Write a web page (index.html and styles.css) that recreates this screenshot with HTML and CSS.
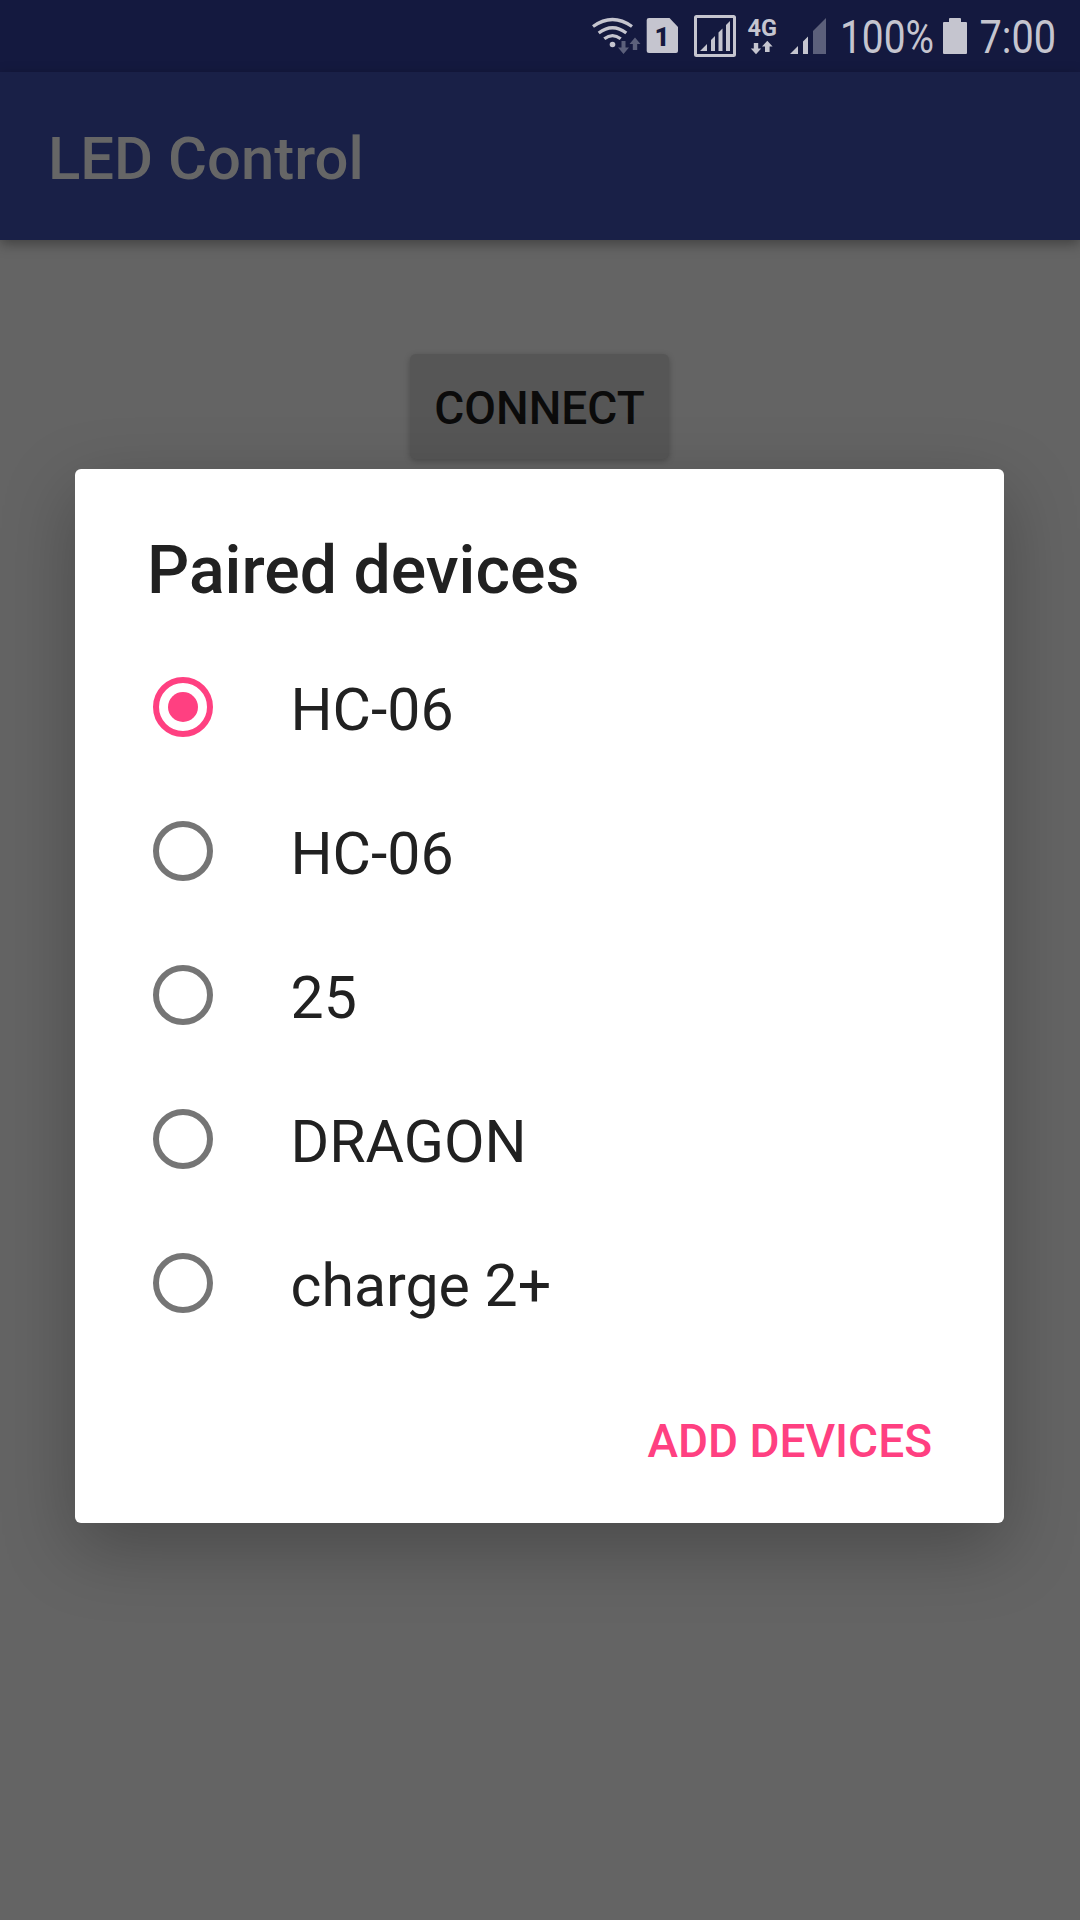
FILE: index.html
```html
<!DOCTYPE html>
<html lang="en">
<head>
<meta charset="utf-8">
<title>LED Control</title>
<link rel="stylesheet" href="styles.css">
</head>
<body>
<div class="screen">
  <header class="status-bar">
    <svg class="wifi" width="54" height="72" viewBox="590 0 54 72">
      <g class="arc">
        <path d="M593 26.5Q612.500 12.500 632 26.500"/>
        <path d="M598.700 33Q612.500 22.500 626.300 33"/>
        <path d="M604.300 38.800Q612.500 32.500 620.700 38.800"/>
      </g>
      <circle class="ink" cx="612.500" cy="44.500" r="2.800"/>
      <path class="dim" d="M621.500 41h4v6.500h3.500l-5.500 6.500l-5.500-6.500h3.500zM632.800 50v-6h-3.300l5.500-6.500l5.500 6.500h-3.300v6z"/>
    </svg>
    <svg class="sim" width="36" height="72" viewBox="644 0 36 72">
      <path class="ink" d="M649 18H669.500L678 27V51Q678 53 676 53H649Q646.700 53 646.700 51V20Q646.700 18 649 18z"/>
      <text class="sim-number" x="654.500" y="45.700">1</text>
    </svg>
    <svg class="boxed-signal" width="44" height="72" viewBox="693 0 44 72">
      <rect class="frame" x="695.500" y="16.500" width="39" height="39" rx="1"/>
      <path class="ink" d="M700 51l7-7v7zM711 51V40l4-4v15zM718.500 51V32.500l4-4v22.500zM726 51V25l4-4v30z"/>
    </svg>
    <svg class="network" width="34" height="72" viewBox="745 0 34 72">
      <text class="network-label" x="747.500" y="36" textLength="29.500" lengthAdjust="spacingAndGlyphs">4G</text>
      <path class="ink" d="M753.800 43h4.400v5.500h3l-5.200 5.800l-5.200-5.800h3zM765 52v-5.500h-3l5.300-5.800l5.300 5.800h-3v5.500z"/>
    </svg>
    <svg class="signal" width="40" height="72" viewBox="788 0 40 72">
      <path class="ink" d="M790 54l8-8v8zM803 54V41.500l5-5v17.500z"/>
      <path class="dim" d="M813 54V31l13-13v36z"/>
    </svg>
    <svg class="percent" width="100" height="72" viewBox="838 0 100 72">
      <text class="status-text" x="840" y="53" textLength="94" lengthAdjust="spacingAndGlyphs">100%</text>
    </svg>
    <svg class="battery" width="26" height="72" viewBox="942 0 26 72">
      <path class="ink" d="M949 22V19Q949 18 950 18H960Q961 18 961 19V22H966Q967 22 967 23V53Q967 54 966 54H944Q943 54 943 53V23Q943 22 944 22z"/>
    </svg>
    <svg class="clock" width="84" height="72" viewBox="976 0 84 72">
      <text class="status-text" x="979.500" y="53" textLength="76.500" lengthAdjust="spacingAndGlyphs">7:00</text>
    </svg>
  </header>
  <div class="app-bar"><h1 class="app-title">LED Control</h1></div>
  <main class="content">
    <button class="connect">CONNECT</button>
    <section class="dialog">
      <h2 class="dialog-title">Paired devices</h2>
      <ul class="devices">
        <li class="device"><span class="radio checked"></span><span class="name">HC-06</span></li>
        <li class="device"><span class="radio"></span><span class="name">HC-06</span></li>
        <li class="device"><span class="radio"></span><span class="name">25</span></li>
        <li class="device"><span class="radio"></span><span class="name">DRAGON</span></li>
        <li class="device"><span class="radio"></span><span class="name">charge 2+</span></li>
      </ul>
      <div class="actions"><button class="add">ADD DEVICES</button></div>
    </section>
  </main>
</div>
</body>
</html>
```

FILE: styles.css
```css
* { box-sizing: border-box; margin: 0; padding: 0; }
body { font-family: Roboto, "Liberation Sans", sans-serif; background: #646464; }
button { border: 0; background: none; font-family: inherit; }
.screen { width: 1080px; height: 1920px; display: flex; flex-direction: column; overflow: hidden; background: #646464; }

.status-bar { height: 72px; flex: none; display: flex; padding-left: 590px; background: #14193f; }
.status-bar svg { flex: none; display: block; overflow: visible; }
.boxed-signal { margin-left: 13px; }
.network { margin-left: 8px; }
.signal { margin-left: 9px; }
.percent { margin-left: 10px; }
.battery { margin-left: 4px; }
.clock { margin-left: 8px; }
.ink { fill: #c5c5cf; }
.dim { fill: #5c607b; }
.frame { fill: none; stroke: #c5c5cf; stroke-width: 3; }
.arc { fill: none; stroke: #c5c5cf; stroke-width: 3.3; }
.sim-number { fill: #14193f; font-size: 26px; font-weight: 900; }
.network-label { fill: #c5c5cf; font-size: 23px; font-weight: 700; }
.status-text { fill: #c5c5cf; font-size: 46px; }

.app-bar { height: 168px; flex: none; display: flex; align-items: center; padding: 6px 48px 0; background: #192047; box-shadow: 0 4px 12px rgba(0, 0, 0, .35); z-index: 1; }
.app-title { font-size: 59.8px; line-height: 72px; font-weight: 500; color: #666; }

.content { display: flex; flex-direction: column; align-items: center; padding-top: 114px; }
.connect { width: 259px; height: 105px; margin-right: 1px; padding-top: 3px; border-radius: 6px; background: #565656; box-shadow: 0 2px 6px rgba(0, 0, 0, .25); font-size: 46px; line-height: 54px; font-weight: 500; color: #0b0b0b; }
.dialog { width: 929px; height: 1054px; margin-top: 10px; margin-right: 1px; padding-top: 64px; border-radius: 6px; background: #fff; box-shadow: 0 24px 72px rgba(0, 0, 0, .27); }
.dialog-title { padding-left: 72px; font-size: 66.2px; line-height: 76px; font-weight: 500; color: #212121; }
.devices { list-style: none; padding-top: 26px; }
.device { height: 144px; display: flex; align-items: center; gap: 77.5px; padding-left: 78px; }
.radio { width: 60px; height: 60px; border: 6px solid #757575; border-radius: 50%; display: grid; place-items: center; }
.radio.checked { border-color: #ff4081; }
.radio.checked::after { content: ""; width: 30px; height: 30px; border-radius: 50%; background: #ff4081; }
.name { font-size: 59px; line-height: 70px; color: #212121; padding-top: 6px; }
.actions { display: flex; justify-content: flex-end; padding: 32px 72px 0 0; }
.add { height: 108px; font-size: 46px; line-height: 54px; font-weight: 500; color: #ff4081; }
```
